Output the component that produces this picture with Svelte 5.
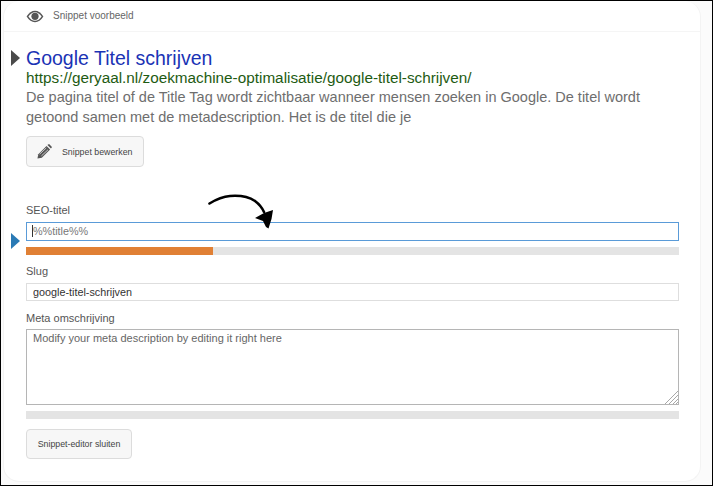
<script>
  const title = "Google Titel schrijven";
  const url = "https://geryaal.nl/zoekmachine-optimalisatie/google-titel-schrijven/";
  const description =
    "De pagina titel of de Title Tag wordt zichtbaar wanneer mensen zoeken in Google. De titel wordt getoond samen met de metadescription. Het is de titel die je";
</script>

<div class="frame">
  <div class="card">
    <header class="head">
      <svg class="eye" width="18" height="13" viewBox="0 0 18 13">
        <path d="M0.6 6.5C3 2.6 5.8 0.8 9 0.8s6 1.8 8.4 5.7C15 10.4 12.2 12.2 9 12.2S3 10.4 0.6 6.5z" fill="#555" />
        <path d="M2.4 6.5C4.2 3.8 6.4 2.2 9 2.2s4.8 1.6 6.6 4.3C13.8 9.2 11.6 10.8 9 10.8S4.2 9.2 2.4 6.5z" fill="#fff" />
        <circle cx="9" cy="6.3" r="3.6" fill="#555" />
      </svg>
      <span>Snippet voorbeeld</span>
    </header>

    <section class="preview">
      <span class="marker dark"></span>
      <h2>{title}</h2>
      <div class="url">{url}</div>
      <p>{description}</p>
      <button class="btn edit">
        <svg width="15" height="15" viewBox="0 0 17 17">
          <path d="M0.5 16.5L1.5 11.5L10.8 2.2L14.8 6.2L5.5 15.5z" fill="#555" />
          <path d="M11.8 1.2L13 0.3Q13.5 0 14 0.3L16.7 3Q17 3.5 16.7 4L15.8 5.2z" fill="#555" />
          <path d="M3 11.5L10.5 4.5M5 13.5L12.5 6.5" stroke="#f7f7f7" stroke-width="0.8" />
        </svg>
        Snippet bewerken
      </button>
    </section>

    <section class="fields">
      <div class="field">
        <label for="seo">SEO-titel</label>
        <div class="focus-row">
          <span class="marker blue"></span>
          <input id="seo" class="active" value="%%title%%" />
          <span class="caret"></span>
          <svg class="arrow" width="72" height="46" viewBox="0 0 72 46">
            <path d="M1.5 17.5C8 13.500 15 10.500 22 10C32 9.200 41 11 47 15C51 18 54 21.500 56 26" fill="none" stroke="#000" stroke-width="2.600" stroke-linecap="round" />
            <path d="M47 32L56 27L65 24L63.500 33L60.500 42.500L58 41L55 35z" fill="#000" />
          </svg>
        </div>
        <div class="progress"><div class="fill" style="width: 187px"></div></div>
      </div>

      <div class="field">
        <label for="slug">Slug</label>
        <input id="slug" class="dark-text" value="google-titel-schrijven" />
      </div>

      <div class="field">
        <label for="meta">Meta omschrijving</label>
        <div class="area">
          <textarea id="meta">Modify your meta description by editing it right here</textarea>
          <svg class="grip" width="13" height="13" viewBox="0 0 13 13">
            <path d="M0 13L13 0M4 13L13 4M8 13L13 8M11 13L13 11" stroke="#a8a8a8" stroke-width="1" fill="none" />
          </svg>
        </div>
        <div class="progress"></div>
      </div>
    </section>

    <button class="btn close">Snippet-editor sluiten</button>
  </div>
</div>

<style>
  :global(body) {
    margin: 0;
    background: #fff;
  }

  .frame {
    box-sizing: border-box;
    width: 713px;
    height: 486px;
    padding: 0 11px 0 2px;
    background: #fbfbfb;
    border: 1px solid #000;
    font-family: "Liberation Sans", Arial, sans-serif;
    overflow: hidden;
  }

  .card {
    box-sizing: border-box;
    height: 481px;
    padding: 0 20px 0 22px;
    background: #fff;
    border: 1px solid #f3f3f3;
    border-top: none;
    border-radius: 16px;
  }

  .head {
    display: flex;
    align-items: center;
    gap: 9px;
    height: 30px;
    margin: 0 -20px 0 -22px;
    padding: 0 0 0 22px;
    border-bottom: 1px solid #f5f5f5;
    font-size: 10px;
    color: #666;
  }

  .eye {
    flex: none;
  }

  .head span {
    margin-top: -2px;
  }

  .preview {
    position: relative;
    padding-top: 16px;
  }

  .marker {
    position: absolute;
    width: 0;
    height: 0;
    border-style: solid;
    border-width: 8px 0 8px 9px;
    border-color: transparent;
  }

  .marker.dark {
    left: -15px;
    top: 18px;
    border-left-color: #4a4a4a;
  }

  .marker.blue {
    left: -15px;
    top: 11px;
    border-left-color: #2a7ab5;
  }

  h2 {
    margin: 0;
    font-size: 19.5px;
    line-height: 21px;
    font-weight: 400;
    color: #1a33b5;
  }

  .url {
    font-size: 15.3px;
    line-height: 17px;
    color: #1e5b12;
    white-space: nowrap;
  }

  p {
    width: 625px;
    margin: 1px 0 0;
    font-size: 14.5px;
    line-height: 20px;
    color: #6e6e6e;
  }

  .btn {
    display: flex;
    align-items: center;
    box-sizing: border-box;
    background: #f7f7f7;
    border: 1px solid #dcdcdc;
    border-radius: 4px;
    font-family: inherit;
    font-size: 8.8px;
    color: #444;
    padding: 0;
  }

  .edit {
    gap: 10px;
    width: 118px;
    height: 31px;
    margin-top: 9px;
    padding-left: 10px;
  }

  .fields {
    width: 653px;
    margin-top: 37px;
  }

  label {
    display: block;
    font-size: 11px;
    line-height: 13px;
    color: #555;
  }

  .focus-row {
    position: relative;
    margin-top: 5px;
  }

  input,
  textarea {
    display: block;
    box-sizing: border-box;
    width: 100%;
    margin: 0;
    font-family: inherit;
    outline: none;
    border-radius: 0;
  }

  input {
    height: 18.5px;
    padding: 0 6px;
    font-size: 10.8px;
    border: 1px solid #dedede;
    background: #fff;
  }

  input.active {
    border-color: #5a9bd8;
    color: #777;
  }

  input.dark-text {
    color: #333;
  }

  .caret {
    position: absolute;
    left: 6px;
    top: 3px;
    width: 1px;
    height: 12px;
    background: #333;
  }

  .arrow {
    position: absolute;
    left: 182px;
    top: -36px;
    overflow: visible;
  }

  .progress {
    height: 8px;
    margin-top: 6px;
    background: #e4e4e4;
  }

  .fill {
    height: 100%;
    background: #e08035;
  }

  .field:nth-child(2) {
    margin-top: 10px;
  }

  .field:nth-child(2) label {
    margin-bottom: 5px;
  }

  .field:nth-child(3) {
    margin-top: 11px;
  }

  .field:nth-child(3) label {
    margin-bottom: 4px;
  }

  .area {
    position: relative;
  }

  textarea {
    height: 76px;
    padding: 2px 6px;
    font-size: 11px;
    color: #666;
    border: 1px solid #b5b5b5;
    background: #fff;
    resize: none;
  }

  .grip {
    position: absolute;
    right: 1px;
    bottom: 1px;
  }

  .close {
    justify-content: center;
    width: 106px;
    height: 30px;
    margin-top: 10px;
  }
</style>
